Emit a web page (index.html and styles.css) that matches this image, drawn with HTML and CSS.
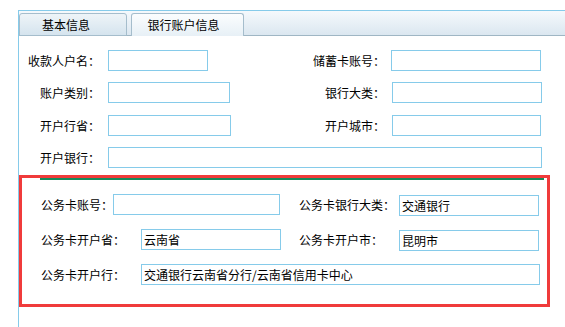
FILE: index.html
```html
<!DOCTYPE html>
<html lang="zh-CN">
<head>
<meta charset="utf-8"/>
<meta content="width=device-width, initial-scale=1.0" name="viewport"/>
<title>银行账户信息</title>
<link rel="stylesheet" href="styles.css">
</head>
<body>
<div class="panel">
<div class="tab-bar">
<div class="tab">基本信息</div>
<div class="tab active">银行账户信息</div>
</div>
<div class="basic-form">
<div class="row">
<label class="lbl">收款人户名：</label>
<div class="cell"><input class="w100" type="text"></div>
<label class="lbl-r">储蓄卡账号：</label>
<input class="w150" type="text">
</div>
<div class="row">
<label class="lbl">账户类别：</label>
<div class="cell"><input class="w122" type="text"></div>
<label class="lbl-r">银行大类：</label>
<input class="w150 shift" type="text">
</div>
<div class="row">
<label class="lbl">开户行省：</label>
<div class="cell"><input class="w123" type="text"></div>
<label class="lbl-r">开户城市：</label>
<input class="w149 shift" type="text">
</div>
<div class="row">
<label class="lbl">开户银行：</label>
<input class="w434" type="text">
</div>
</div>
<div class="card-box">
<div class="card-inner">
<div class="card-row">
<div class="card-cell">
<label class="card-lbl short">公务卡账号：</label>
<input class="w167" type="text">
</div>
<label class="card-lbl">公务卡银行大类：</label>
<input class="w140 low" type="text" value="交通银行">
</div>
<div class="card-row">
<div class="card-cell">
<label class="card-lbl">公务卡开户省：</label>
<input class="w140" type="text" value="云南省">
</div>
<label class="card-lbl">公务卡开户市：</label>
<input class="w140 low" type="text" value="昆明市">
</div>
<div class="card-row">
<label class="card-lbl">公务卡开户行：</label>
<input class="w399" type="text" value="交通银行云南省分行/云南省信用卡中心">
</div>
</div>
</div>
</div>
</body>
</html>
```

FILE: styles.css
```css
body {
    margin: 0;
    padding: 0;
    overflow: hidden;
    background: #fff;
    color: #000;
    font-family: "Noto Sans CJK SC", "Liberation Sans", sans-serif;
    font-size: 12px;
}
.panel {
    margin: 10px 0 0 18px;
    height: 317px;
    border-top: 1px solid #86cbea;
    border-left: 1px solid #86cbea;
}
.tab-bar {
    display: flex;
    align-items: flex-end;
    gap: 4px;
    height: 24px;
    border-bottom: 1px solid #9fb6c4;
    background: linear-gradient(#f5f9fc, #dbe7f0);
}
.tab {
    box-sizing: border-box;
    width: 108px;
    height: 23px;
    margin-bottom: -1px;
    padding-right: 14px;
    border: 1px solid #a5bdcc;
    border-radius: 3px 3px 0 0;
    background: linear-gradient(#eef4f8, #d5e4ee);
    text-align: center;
    line-height: 21px;
    font-size: 12px;
}
.tab.active {
    width: 113px;
    padding-right: 8px;
    border-bottom: none;
    background: linear-gradient(#fbfdfe, #e7f0f6);
}
.basic-form {
    padding-top: 14px;
}
.row {
    display: flex;
    align-items: center;
    height: 21px;
    margin-bottom: 11px;
}
.row:nth-child(2) {
    margin-bottom: 12px;
}
.row:last-child {
    margin-bottom: 0;
}
.lbl {
    width: 81px;
    margin-right: 8px;
    text-align: right;
    white-space: nowrap;
}
.cell {
    width: 192px;
}
.lbl-r {
    width: 85px;
    margin-right: 6px;
    text-align: right;
    white-space: nowrap;
}
input {
    box-sizing: border-box;
    height: 21px;
    margin: 0;
    padding: 0 2px;
    border: 1px solid #86cbea;
    background: #fff;
    color: #000;
    font-family: "Noto Sans CJK SC", "Liberation Sans", sans-serif;
    font-size: 12px;
    outline: none;
}
input.shift {
    margin-left: 1px;
}
.w100 { width: 100px; }
.w122 { width: 122px; }
.w123 { width: 123px; }
.w149 { width: 149px; }
.w150 { width: 150px; }
.w434 { width: 434px; }
.w167 { width: 167px; }
.w140 { width: 140px; }
.w399 { width: 399px; }
.card-box {
    box-sizing: border-box;
    width: 531px;
    height: 132px;
    margin-top: 7px;
    border: 3px solid #f03b3b;
}
.card-inner {
    margin: 0 3px 0 18px;
    padding: 14px 0 0 1px;
    border-top: 2px solid #158b5c;
}
.card-row {
    display: flex;
    align-items: center;
    height: 21px;
    margin-bottom: 14px;
}
.card-cell {
    display: flex;
    align-items: center;
    width: 258px;
}
.card-lbl {
    width: 100px;
    white-space: nowrap;
}
.card-lbl.short {
    width: 72px;
}
input.low {
    position: relative;
    top: 1px;
}
```
